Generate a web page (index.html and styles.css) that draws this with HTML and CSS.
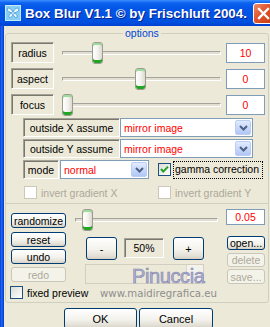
FILE: index.html
```html
<!DOCTYPE html>
<html>
<head>
<meta charset="utf-8">
<title>Box Blur</title>
<link rel="stylesheet" href="styles.css">
</head>
<body>
<div class="window">
  <div class="titlebar">
    <svg class="app-icon" width="16" height="16" viewBox="0 0 16 16">
      <rect x="0.5" y="0.5" width="15" height="15" fill="#86CFF3" stroke="#C4E9FB"/>
      <path d="M8 7 C6.5 3.5 2.5 2 2.2 4 C2 6 4 7.5 7.4 8 C4.5 8.6 3.2 10.8 4.2 12.3 C5.5 13.4 7.4 11.2 8 9.2 C8.6 11.2 10.5 13.4 11.8 12.3 C12.8 10.8 11.5 8.6 8.6 8 C12 7.5 14 6 13.8 4 C13.5 2 9.5 3.5 8 7Z" fill="#EAF8FF" stroke="#3A93DA" stroke-width="0.8"/>
    </svg>
    <span class="title">Box Blur V1.1 © by Frischluft 2004.</span>
    <div class="close">
      <svg width="13" height="13" viewBox="0 0 13 13"><path d="M2 2 L11 11 M11 2 L2 11" stroke="#fff" stroke-width="2.3" stroke-linecap="square"/></svg>
    </div>
  </div>
  <div class="frame">
    <div class="lborder"></div>
    <div class="client">
      <div class="group">
        <span class="legend">options</span>

        <div class="slider-rows">
          <div class="srow">
            <div class="sunken lbl">radius</div>
            <div class="slider"><div class="track"></div><div class="thumb" style="left:30px"></div></div>
            <div class="edit">10</div>
          </div>
          <div class="srow">
            <div class="sunken lbl">aspect</div>
            <div class="slider"><div class="track"></div><div class="thumb" style="left:73px"></div></div>
            <div class="edit">0</div>
          </div>
          <div class="srow">
            <div class="sunken lbl">focus</div>
            <div class="slider"><div class="track"></div><div class="thumb" style="left:0px"></div></div>
            <div class="edit">0</div>
          </div>
        </div>

        <div class="assume-rows">
          <div class="arow">
            <div class="sunken alabel">outside X assume</div>
            <div class="select wide"><span class="val">mirror image</span><span class="drop"><svg width="9" height="6" viewBox="0 0 9 6"><path d="M1 1 L4.5 4.5 L8 1" fill="none" stroke="#4D6185" stroke-width="2"/></svg></span></div>
          </div>
          <div class="arow">
            <div class="sunken alabel">outside Y assume</div>
            <div class="select wide"><span class="val">mirror image</span><span class="drop"><svg width="9" height="6" viewBox="0 0 9 6"><path d="M1 1 L4.5 4.5 L8 1" fill="none" stroke="#4D6185" stroke-width="2"/></svg></span></div>
          </div>
          <div class="arow">
            <div class="sunken mlabel">mode</div>
            <div class="select narrow"><span class="val">normal</span><span class="drop"><svg width="9" height="6" viewBox="0 0 9 6"><path d="M1 1 L4.5 4.5 L8 1" fill="none" stroke="#4D6185" stroke-width="2"/></svg></span></div>
            <div class="cb checked"><svg width="11" height="11" viewBox="0 0 11 11"><path d="M2 5 L4.3 7.6 L9 2.6" fill="none" stroke="#21A121" stroke-width="2"/></svg></div>
            <span class="focus-label">gamma correction</span>
          </div>
        </div>

        <div class="invert-row">
          <div class="invert-item first"><div class="cb disabled"></div><span>invert gradient X</span></div>
          <div class="invert-item"><div class="cb disabled"></div><span>invert gradient Y</span></div>
        </div>

        <div class="sep"></div>

        <div class="lower">
          <div class="col-left">
            <div class="btn b-randomize">randomize</div>
            <div class="btn b-reset">reset</div>
            <div class="btn b-undo">undo</div>
            <div class="btn disabled b-redo">redo</div>
          </div>
          <div class="col-mid">
            <div class="slider rslider"><div class="track"></div><div class="thumb" style="left:7px"></div></div>
            <div class="pm-row">
              <div class="btn big minus">-</div>
              <div class="sunken pct">50%</div>
              <div class="btn big plus">+</div>
            </div>
            <div class="preview-strip"><div class="strip-knob"></div></div>
          </div>
          <div class="col-right">
            <div class="edit small">0.05</div>
            <div class="btn b-open">open...</div>
            <div class="btn disabled b-delete">delete</div>
            <div class="btn disabled b-save">save...</div>
          </div>
        </div>

        <div class="fixed-row">
          <div class="cb"></div><span>fixed preview</span>
        </div>
      </div>

      <div class="dialog-buttons">
        <div class="btn dlg ok">OK</div>
        <div class="btn dlg cancel">Cancel</div>
      </div>
    </div>
  </div>

  <div class="wm-name">Pinuccia</div>
  <div class="wm-url">www.maidiregrafica.eu</div>
</div>
</body>
</html>
```

FILE: styles.css
```css
* { box-sizing: border-box; }
html, body {
  margin: 0;
  padding: 0;
  overflow: hidden;
  background: #ECE9D8;
}
body {
  width: 270px;
  height: 327px;
  font-family: "Liberation Sans", Arial, sans-serif;
  font-size: 10.5px;
  color: #000;
}
.window {
  position: relative;
  width: 276px;
  height: 327px;
  background: #ECE9D8;
  display: flex;
  flex-direction: column;
}

/* title bar */
.titlebar {
  flex: none;
  height: 26px;
  display: flex;
  align-items: center;
  padding-left: 5px;
  background: linear-gradient(#3C8EFF 0px, #0C61EE 3px, #0257E8 8px, #0055E5 50%, #0050DF 85%, #0040D2 100%);
  color: #fff;
}
.app-icon { flex: none; display: block; }
.title {
  margin-left: 4px;
  font-weight: bold;
  font-size: 13.4px;
  white-space: nowrap;
  text-shadow: 1px 1px 0 #0A1F8F;
}
.close {
  margin-left: auto;
  margin-right: 2px;
  width: 21px;
  height: 21px;
  flex: none;
  border: 1px solid #fff;
  border-radius: 3px;
  background: linear-gradient(135deg, #F08A68, #E0552E 45%, #C83A12);
  display: flex;
  align-items: center;
  justify-content: center;
}
.close svg { display: block; }

/* frame */
.frame { flex: 1; display: flex; }
.lborder {
  width: 4px;
  flex: none;
  background: linear-gradient(to right, #0A3CD4, #1D66F2 40%, #0B4EE0 75%, #0733C8);
}
.client { flex: 1; padding-top: 7px; }

.group {
  position: relative;
  margin-left: 1px;
  width: 264px;
  height: 270px;
  border: 1px solid #D0D0BF;
  border-radius: 3px;
}
.legend {
  position: absolute;
  top: -7px;
  left: 117px;
  padding: 0 2px;
  background: #ECE9D8;
  color: #0046D5;
  line-height: 12px;
}

/* sunken static labels */
.sunken {
  border: 1px solid;
  border-color: #A3A198 #fff #fff #A3A198;
  box-shadow: inset 1px 1px 0 #7A786D;
  display: flex;
  align-items: center;
  justify-content: center;
  white-space: nowrap;
}

/* slider rows */
.slider-rows {
  padding-top: 8px;
  display: flex;
  flex-direction: column;
  gap: 5px;
}
.srow {
  display: flex;
  align-items: flex-start;
  padding-left: 5px;
  height: 21px;
}
.lbl { width: 43px; height: 21px; }
.slider {
  position: relative;
  margin-left: 8px;
  width: 159px;
  height: 21px;
  display: flex;
  align-items: center;
}
.track {
  width: 100%;
  height: 4px;
  border: 1px solid;
  border-color: #A5A49C #fff #fff #A5A49C;
  background: #E2DFD2;
}
.thumb {
  position: absolute;
  top: 0;
  width: 11px;
  height: 22px;
  border: 1px solid #9C9B92;
  border-radius: 3px;
  background: linear-gradient(to right, #FFFFFF, #F4F3EE 50%, #DCDAD0);
  box-shadow: inset 0 2px 0 #9EDC9E, inset 0 -3px 0 #22A522;
}
.edit {
  margin-left: 5px;
  width: 39px;
  height: 20px;
  margin-top: 1px;
  border: 1px solid #7F9DB9;
  background: #fff;
  color: #f00;
  display: flex;
  align-items: center;
  justify-content: center;
}

/* assume rows */
.assume-rows {
  margin-top: 3px;
  display: flex;
  flex-direction: column;
  gap: 2px;
}
.arow {
  display: flex;
  align-items: center;
  padding-left: 17px;
  height: 19px;
}
.alabel { width: 97px; height: 19px; }
.mlabel { width: 36px; height: 19px; }
.select {
  height: 19px;
  display: flex;
  align-items: center;
  border: 1px solid #7F9DB9;
  background: #fff;
  color: #f00;
  padding: 0 1px 0 0;
}
.select.wide { width: 133px; }
.select.narrow { width: 89px; margin-left: 1px; }
.select .val { flex: 1; padding-left: 3px; white-space: nowrap; }
.drop {
  width: 16px;
  height: 15px;
  border: 1px solid #BACEF5;
  border-radius: 2px;
  background: linear-gradient(#E2EBFD, #C4D5FA 60%, #B1C6F4);
  display: flex;
  align-items: center;
  justify-content: center;
}
.drop svg { display: block; }

.cb {
  width: 13px;
  height: 13px;
  flex: none;
  border: 1px solid #1C5180;
  background: linear-gradient(135deg, #DCDCD6, #FFFFFF);
  display: flex;
  align-items: center;
  justify-content: center;
}
.cb svg { display: block; }
.cb.checked { margin-left: 9px; }
.cb.disabled { border-color: #CAC8BB; background: #fff; }
.focus-label {
  margin-left: 2px;
  padding: 1px 3px 2px 1px;
  border: 1px dotted #000;
  white-space: nowrap;
  line-height: 13px;
}

/* invert row */
.invert-row {
  margin-top: 7px;
  display: flex;
  padding-left: 18px;
  height: 13px;
  color: #ACA899;
}
.invert-item { display: flex; align-items: center; gap: 4px; white-space: nowrap; }
.invert-item.first { width: 134px; }

.sep {
  margin-top: 4px;
  height: 1px;
  background: #D0D0BF;
}

/* lower section */
.lower { display: flex; align-items: flex-start; }
.col-left {
  padding-left: 5px;
  width: 60px;
  display: flex;
  flex-direction: column;
}
.btn {
  border: 1px solid #003C74;
  border-radius: 3px;
  background: linear-gradient(#FFFFFF, #F3F2EC 55%, #E3E0D6 85%, #D6D0C5);
  display: flex;
  align-items: center;
  justify-content: center;
  white-space: nowrap;
  color: #000;
}
.btn.disabled {
  border-color: #C9C7BA;
  background: #F4F3EA;
  color: #ACA899;
}
.col-left .btn { width: 55px; height: 15px; }
.b-randomize { margin-top: 9px; }
.b-reset { margin-top: 4px; }
.b-undo { margin-top: 2px; }
.b-redo { margin-top: 3px; }

.col-mid {
  margin-left: 9px;
  width: 146px;
  display: flex;
  flex-direction: column;
}
.rslider { margin-left: 0; width: 143px; height: 22px; margin-top: 5px; }
.pm-row { display: flex; align-items: flex-start; margin-top: 6px; }
.btn.big { width: 31px; height: 23px; font-size: 11px; }
.minus { margin-left: 11px; }
.pct { width: 40px; height: 20px; margin-left: 7px; margin-top: 1px; }
.plus { margin-left: 9px; }
.preview-strip {
  margin-top: 4px;
  margin-left: 10px;
  width: 119px;
  height: 20px;
  border: 1px solid #D2CFC1;
  background: #ECE9D8;
  display: flex;
  justify-content: flex-end;
}
.strip-knob {
  width: 17px;
  height: 100%;
  border-left: 1px solid #DAD7CB;
  background: #F3F2EC;
}

.col-right {
  margin-left: 5px;
  width: 39px;
  display: flex;
  flex-direction: column;
}
.edit.small { margin-left: 0; margin-top: 5px; height: 16px; }
.col-right .btn { width: 38px; margin-left: 1px; }
.b-open { margin-top: 11px; height: 14px; }
.b-delete { margin-top: 3px; height: 14px; }
.b-save { margin-top: 2px; height: 15px; }

.fixed-row {
  margin-top: 2px;
  padding-left: 4px;
  display: flex;
  align-items: center;
  height: 13px;
  gap: 4px;
  white-space: nowrap;
}
.fixed-row .cb { border-color: #1C5180; }

/* dialog buttons */
.dialog-buttons {
  display: flex;
  margin-top: 5px;
  padding-left: 60px;
  gap: 2px;
}
.btn.dlg { height: 21px; font-size: 11px; }
.ok { width: 73px; }
.cancel { width: 74px; }

/* watermark overlay */
.wm-name {
  position: absolute;
  left: 132px;
  top: 266px;
  font-family: "Liberation Sans", Arial, sans-serif;
  font-size: 20px;
  line-height: 20px;
  letter-spacing: -0.4px;
  color: #B0B2D6;
  -webkit-text-stroke: 0.6px #8183AC;
}
.wm-url {
  position: absolute;
  left: 100px;
  top: 288px;
  font-family: "DejaVu Sans", sans-serif;
  font-size: 10.2px;
  line-height: 12px;
  color: #8E8E8E;
}
```
